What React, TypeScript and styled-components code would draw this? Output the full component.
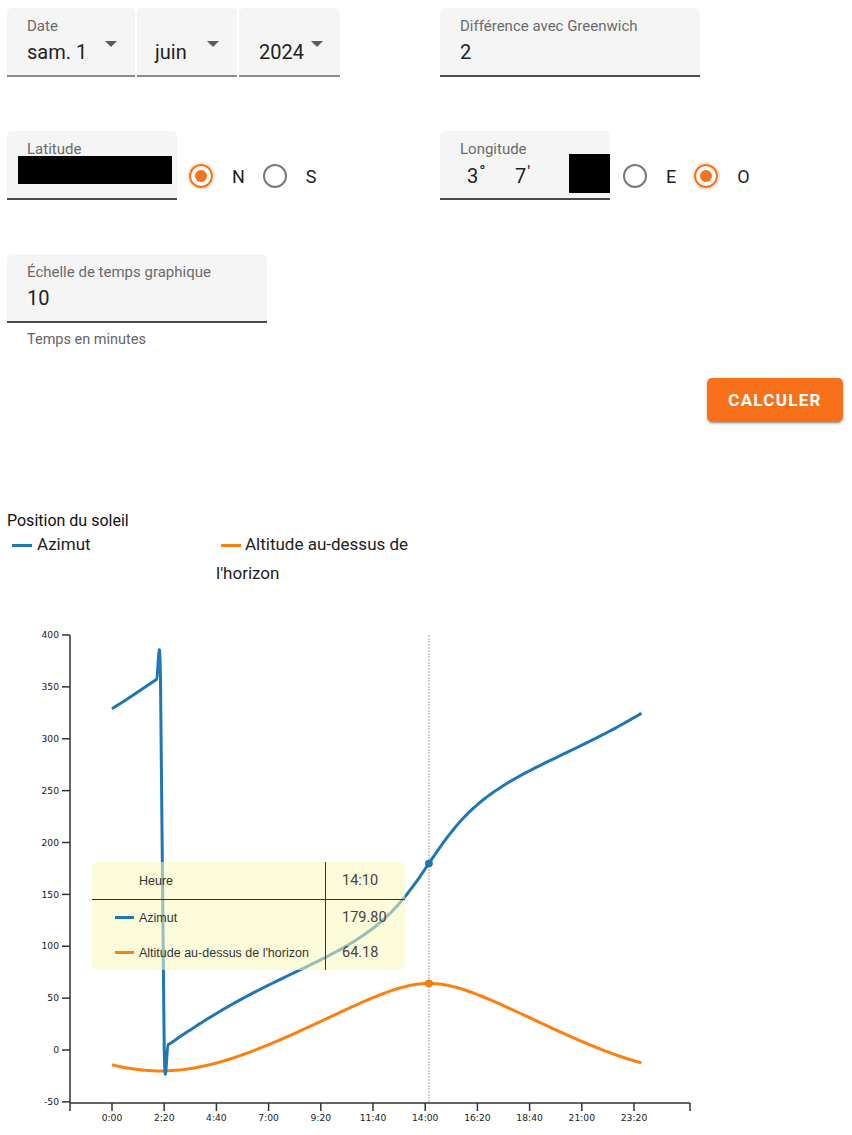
import React from 'react'
import styled, { createGlobalStyle } from 'styled-components'

const blue = '#1f77b4'
const orange = '#ff7f0e'
const accent = '#f5731b'

const GlobalStyle = createGlobalStyle`
  body {
    margin: 0;
    background: #fff;
    font-family: Roboto, 'Liberation Sans', sans-serif;
  }
`

const Page = styled.div`
  width: 852px;
  box-sizing: border-box;
  padding: 8px 0 0 7px;
`

const FormGrid = styled.div`
  display: grid;
  grid-template-columns: 433px 1fr;
  row-gap: 54px;
  align-items: start;
`

const Row = styled.div`
  display: flex;
  align-items: flex-end;
`

const Joined = styled.div`
  display: flex;
  gap: 2px;
`

const Field = styled.div<{ $w: number; $line?: string }>`
  width: ${({ $w }) => $w}px;
  height: 69px;
  box-sizing: border-box;
  padding: 9px 0 0 20px;
  background: #f5f5f5;
  border-radius: 5px 5px 0 0;
  border-bottom: 2px solid ${({ $line }) => $line || '#4a4a4a'};
`

const Label = styled.div`
  height: 18px;
  font-size: 15px;
  line-height: 18px;
  color: #6b6b6b;
`

const Value = styled.div`
  margin-top: 5px;
  font-size: 20px;
  line-height: 24px;
  color: #222;
`

const SelectRow = styled.div`
  display: flex;
  justify-content: space-between;
  padding-right: 18px;
`

const Arrow = styled.span`
  margin-top: 6px;
  width: 0;
  height: 0;
  border-left: 6px solid transparent;
  border-right: 6px solid transparent;
  border-top: 6px solid #5a5a5a;
`

const Redacted = styled.div<{ $w: number; $h: number; $top: number; $left: number }>`
  width: ${({ $w }) => $w}px;
  height: ${({ $h }) => $h}px;
  margin-top: ${({ $top }) => $top}px;
  margin-left: ${({ $left }) => $left}px;
  background: #000;
`

const DmsRow = styled.div`
  display: flex;
  align-items: flex-start;
`

const Dms = styled.div`
  width: 48px;
  box-sizing: border-box;
  padding-left: 7px;
  margin-top: 6px;
  font-size: 20px;
  line-height: 24px;
  color: #222;

  sup {
    font-size: 17px;
    vertical-align: 6px;
    line-height: 0;
    margin-left: 1px;
  }
`

const Radios = styled.div`
  display: flex;
  align-items: center;
  gap: 18px;
  padding: 0 0 12px 12px;
`

const RadioOption = styled.label`
  display: flex;
  align-items: center;
  gap: 19px;
  font-size: 18px;
  color: #222;
`

const RadioCircle = styled.span<{ $checked?: boolean }>`
  width: 24px;
  height: 24px;
  box-sizing: border-box;
  border-radius: 50%;
  border: 2px solid ${({ $checked }) => ($checked ? accent : '#7a7a7a')};
  display: flex;
  align-items: center;
  justify-content: center;
  box-shadow: ${({ $checked }) => ($checked ? '0 0 0 2px rgba(245,115,27,0.14)' : 'none')};

  &::after {
    content: '';
    width: 12px;
    height: 12px;
    border-radius: 50%;
    background: ${({ $checked }) => ($checked ? accent : 'transparent')};
  }
`

const Helper = styled.div`
  margin: 8px 0 0 20px;
  font-size: 14.5px;
  line-height: 18px;
  color: #666;
`

const Actions = styled.div`
  display: flex;
  justify-content: flex-end;
  padding-right: 9px;
  margin-top: 29px;
`

const Button = styled.button`
  width: 136px;
  height: 44px;
  border: 0;
  border-radius: 5px;
  background: #f7711a;
  color: #fff;
  font-family: Roboto, 'Liberation Sans', sans-serif;
  font-size: 17px;
  font-weight: 700;
  letter-spacing: 1.3px;
  box-shadow: 0 3px 1px -2px rgba(0, 0, 0, 0.2), 0 2px 2px 0 rgba(0, 0, 0, 0.14),
    0 1px 5px 0 rgba(0, 0, 0, 0.12);
`

const ChartTitle = styled.div`
  margin-top: 89px;
  font-size: 16px;
  line-height: 19px;
  color: #111;
`

const Legend = styled.div`
  display: flex;
  gap: 9px;
`

const LegendItem = styled.div`
  width: 200px;
  font-size: 17px;
  line-height: 29px;
  color: #222;
`

const Swatch = styled.span<{ $color: string; $w?: number }>`
  display: inline-block;
  width: ${({ $w }) => $w || 20}px;
  height: 3px;
  margin: 0 5px;
  vertical-align: middle;
  background: ${({ $color }) => $color};
`

const ChartWrap = styled.div`
  position: relative;
  margin: 32px 0 0 -7px;
  height: 515px;
`

const Tooltip = styled.div`
  position: absolute;
  left: 92px;
  top: 242px;
  width: 313px;
  height: 108px;
  border-radius: 5px;
  background: rgba(250, 250, 190, 0.55);
  display: grid;
  grid-template-columns: 234px 1fr;
  grid-template-rows: 38px 35px 35px;
`

const TipName = styled.div<{ $head?: boolean }>`
  display: flex;
  align-items: center;
  padding-left: ${({ $head }) => ($head ? 47 : 23)}px;
  border-right: 1px solid #333;
  border-bottom: ${({ $head }) => ($head ? '1px solid #333' : '0')};
  font-family: 'Liberation Sans', Arial, sans-serif;
  font-size: 12.5px;
  color: #333;

  ${Swatch} {
    margin: 0 5px 0 0;
  }
`

const TipValue = styled.div<{ $head?: boolean }>`
  display: flex;
  align-items: center;
  padding-left: 16px;
  border-bottom: ${({ $head }) => ($head ? '1px solid #333' : '0')};
  font-size: 14.5px;
  color: #444;
`

// sun position for 1 June 2024, UTC+2, longitude 3°7' W
const rad = Math.PI / 180
const lat = 47.82 * rad
const dec = 22.0 * rad

const sunAt = (min: number) => {
  const solar = min - 120 - 12.467 + 2.09
  let h = (solar / 60 - 12) * 15
  while (h <= -180) h += 360
  while (h > 180) h -= 360
  const H = h * rad
  const alt =
    Math.asin(Math.sin(lat) * Math.sin(dec) + Math.cos(lat) * Math.cos(dec) * Math.cos(H)) / rad
  const az =
    Math.atan2(Math.sin(H), Math.cos(H) * Math.sin(lat) - Math.tan(dec) * Math.cos(lat)) / rad + 180
  return { az, alt }
}

const minutes: number[] = []
for (let m = 0; m <= 1420; m += 10) minutes.push(m)

const xS = (m: number) => 112 + m * 0.37286
const yS = (v: number) => 430 - v * 1.0375

const curve = (pts: [number, number][]) => {
  let d = `M${pts[0][0].toFixed(2)},${pts[0][1].toFixed(2)}`
  for (let i = 0; i < pts.length - 1; i++) {
    const p0 = pts[i - 1] || pts[i]
    const p1 = pts[i]
    const p2 = pts[i + 1]
    const p3 = pts[i + 2] || p2
    const c1x = p1[0] + (p2[0] - p0[0]) / 6
    const c1y = p1[1] + (p2[1] - p0[1]) / 6
    const c2x = p2[0] - (p3[0] - p1[0]) / 6
    const c2y = p2[1] - (p3[1] - p1[1]) / 6
    d += `C${c1x.toFixed(2)},${c1y.toFixed(2)},${c2x.toFixed(2)},${c2y.toFixed(2)},${p2[0].toFixed(2)},${p2[1].toFixed(2)}`
  }
  return d
}

const azPath = curve(minutes.map((m) => [xS(m), yS(sunAt(m).az)]))
const altPath = curve(minutes.map((m) => [xS(m), yS(sunAt(m).alt)]))

const yTicks = [400, 350, 300, 250, 200, 150, 100, 50, 0, -50]
const xTicks = [0, 140, 280, 420, 560, 700, 840, 980, 1120, 1260, 1400]
const fmt = (m: number) => `${Math.floor(m / 60)}:${String(m % 60).padStart(2, '0')}`

const cursor = 850
const cur = sunAt(cursor)

const Chart = () => (
  <svg width='700' height='515' viewBox='0 0 700 515' style={{ display: 'block' }}>
    <g fontFamily="'DejaVu Sans', Verdana, sans-serif" fill='#1a1a1a'>
      {yTicks.map((v) => (
        <g key={v}>
          <line x1='62' x2='70' y1={yS(v)} y2={yS(v)} stroke='#333' strokeWidth='1.5' />
          <text x='59' y={yS(v) + 3.2} fontSize='9.2' textAnchor='end'>
            {v}
          </text>
        </g>
      ))}
      {xTicks.map((m) => (
        <g key={m}>
          <line x1={xS(m)} x2={xS(m)} y1='483' y2='491' stroke='#333' strokeWidth='1.5' />
          <text x={xS(m)} y='501' fontSize='9.2' textAnchor='middle'>
            {fmt(m)}
          </text>
        </g>
      ))}
    </g>
    <path d='M70,15 V483 H690 M70,483 V491 M690,483 V491' fill='none' stroke='#333' strokeWidth='1.5' />
    <line
      x1={xS(cursor)}
      x2={xS(cursor)}
      y1='15'
      y2='483'
      stroke='#c4c4c4'
      strokeWidth='1.5'
      strokeDasharray='2 1'
    />
    <path d={altPath} fill='none' stroke={orange} strokeWidth='3' strokeLinejoin='round' />
    <path d={azPath} fill='none' stroke={blue} strokeWidth='3' strokeLinejoin='round' />
    <circle cx={xS(cursor)} cy={yS(cur.az)} r='3.5' fill={blue} stroke='#2a6c9c' />
    <circle cx={xS(cursor)} cy={yS(cur.alt)} r='3.5' fill={orange} stroke='#e0700c' />
  </svg>
)

const App = () => {
  return (
    <>
      <GlobalStyle />
      <Page>
        <FormGrid>
          <Joined>
            <Field $w={128} $line='#8a8a8a'>
              <Label>Date</Label>
              <SelectRow>
                <Value>sam. 1</Value>
                <Arrow />
              </SelectRow>
            </Field>
            <Field $w={100} $line='#8a8a8a' style={{ paddingLeft: 18 }}>
              <Label />
              <SelectRow>
                <Value>juin</Value>
                <Arrow />
              </SelectRow>
            </Field>
            <Field $w={101} $line='#8a8a8a'>
              <Label />
              <SelectRow style={{ paddingRight: 17 }}>
                <Value>2024</Value>
                <Arrow />
              </SelectRow>
            </Field>
          </Joined>
          <Field $w={260}>
            <Label>Différence avec Greenwich</Label>
            <Value>2</Value>
          </Field>

          <Row>
            <Field $w={170}>
              <Label>Latitude</Label>
              <Redacted $w={154} $h={28} $top={-2} $left={-9} />
            </Field>
            <Radios>
              <RadioOption>
                <RadioCircle $checked />N
              </RadioOption>
              <RadioOption>
                <RadioCircle />S
              </RadioOption>
            </Radios>
          </Row>
          <Row>
            <Field $w={170}>
              <Label>Longitude</Label>
              <DmsRow>
                <Dms>
                  3<sup>°</sup>
                </Dms>
                <Dms>
                  7<sup>'</sup>
                </Dms>
                <Redacted $w={41} $h={39} $top={-4} $left={13} />
              </DmsRow>
            </Field>
            <Radios style={{ paddingLeft: 13 }}>
              <RadioOption>
                <RadioCircle />E
              </RadioOption>
              <RadioOption>
                <RadioCircle $checked />O
              </RadioOption>
            </Radios>
          </Row>

          <div>
            <Field $w={260}>
              <Label>Échelle de temps graphique</Label>
              <Value>10</Value>
            </Field>
            <Helper>Temps en minutes</Helper>
          </div>
        </FormGrid>

        <Actions>
          <Button>CALCULER</Button>
        </Actions>

        <ChartTitle>Position du soleil</ChartTitle>
        <Legend>
          <LegendItem>
            <Swatch $color={blue} />
            Azimut
          </LegendItem>
          <LegendItem>
            <Swatch $color={orange} style={{ marginRight: 4 }} />
            Altitude au-dessus de l'horizon
          </LegendItem>
        </Legend>

        <ChartWrap>
          <Chart />
          <Tooltip>
            <TipName $head>Heure</TipName>
            <TipValue $head>{fmt(cursor)}</TipValue>
            <TipName>
              <Swatch $color={blue} $w={19} />
              Azimut
            </TipName>
            <TipValue>{cur.az.toFixed(2)}</TipValue>
            <TipName>
              <Swatch $color={orange} $w={19} />
              Altitude au-dessus de l'horizon
            </TipName>
            <TipValue>{cur.alt.toFixed(2)}</TipValue>
          </Tooltip>
        </ChartWrap>
      </Page>
    </>
  )
}

export default App
